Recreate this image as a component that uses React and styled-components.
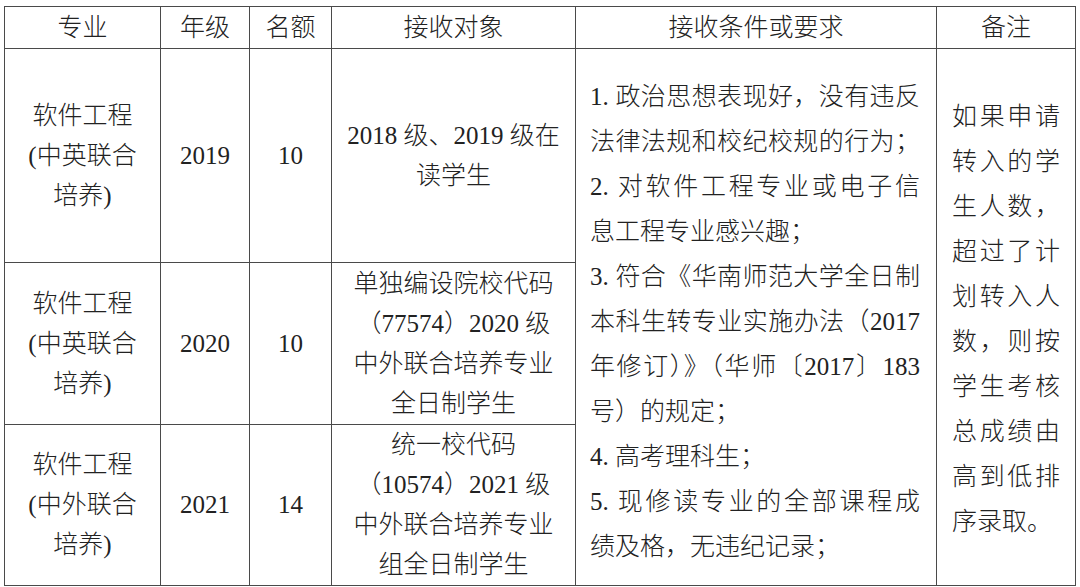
import React from "react";
import styled, { createGlobalStyle } from "styled-components";

const GlobalStyle = createGlobalStyle`
  html, body {
    margin: 0;
    padding: 0;
    background: #ffffff;
  }
  body {
    font-family: "Liberation Serif", "Noto Sans CJK SC", serif;
    color: #222222;
  }
`;

const Page = styled.div`
  width: 1080px;
  height: 587px;
  padding: 6px 5px 0 4px;
  box-sizing: border-box;
  overflow: hidden;
`;

const Table = styled.table`
  width: 1071px;
  border-collapse: collapse;
  table-layout: fixed;
  font-size: 25px;
  font-weight: 300;
`;

const Cell = styled.td`
  border: 1.5px solid #4a4a4a;
  padding: ${(p) => p.$pad || "0"};
  height: ${(p) => p.$h}px;
  text-align: ${(p) => p.$align || "center"};
  vertical-align: middle;
  line-height: ${(p) => p.$lh || 40}px;
  box-sizing: border-box;
`;

const HeadCell = styled.th`
  border: 1.5px solid #4a4a4a;
  height: 41px;
  padding: 0;
  font-weight: 300;
  text-align: center;
  vertical-align: middle;
  line-height: 38px;
`;

const Line = styled.div`
  white-space: nowrap;
  text-align: ${(p) => (p.$justify ? "justify" : "inherit")};
  text-align-last: ${(p) => (p.$justify ? "justify" : "auto")};
`;

const cols = [156, 89, 82, 244, 361, 139];
const headers = ["专业", "年级", "名额", "接收对象", "接收条件或要求", "备注"];

const rows = [
  {
    h: 214,
    major: ["软件工程", "(中英联合", "培养)"],
    grade: "2019",
    quota: "10",
    target: ["2018 级、2019 级在", "读学生"],
  },
  {
    h: 162,
    major: ["软件工程", "(中英联合", "培养)"],
    grade: "2020",
    quota: "10",
    target: ["单独编设院校代码", "（77574）2020 级", "中外联合培养专业", "全日制学生"],
  },
  {
    h: 159,
    major: ["软件工程", "(中外联合", "培养)"],
    grade: "2021",
    quota: "14",
    target: ["统一校代码", "（10574）2021 级", "中外联合培养专业", "组全日制学生"],
  },
];

const conditions = [
  ["1. 政治思想表现好，没有违反", true],
  ["法律法规和校纪校规的行为；", true],
  ["2. 对软件工程专业或电子信", true],
  ["息工程专业感兴趣；", false],
  ["3. 符合《华南师范大学全日制", true],
  ["本科生转专业实施办法（2017", true],
  ["年修订）》（华师〔2017〕183", true],
  ["号）的规定；", false],
  ["4. 高考理科生；", false],
  ["5. 现修读专业的全部课程成", true],
  ["绩及格，无违纪记录；", false],
];

const notes = [
  ["如果申请", true],
  ["转入的学", true],
  ["生人数，", true],
  ["超过了计", true],
  ["划转入人", true],
  ["数，则按", true],
  ["学生考核", true],
  ["总成绩由", true],
  ["高到低排", true],
  ["序录取。", false],
];

function Lines({ items }) {
  return items.map((t, i) => <Line key={i}>{t}</Line>);
}

export default function App() {
  return (
    <>
      <GlobalStyle />
      <Page>
        <Table>
          <colgroup>
            {cols.map((w, i) => (
              <col key={i} style={{ width: w }} />
            ))}
          </colgroup>
          <thead>
            <tr>
              {headers.map((h) => (
                <HeadCell key={h}>{h}</HeadCell>
              ))}
            </tr>
          </thead>
          <tbody>
            {rows.map((r, i) => (
              <tr key={r.grade}>
                <Cell $h={r.h}>
                  <Lines items={r.major} />
                </Cell>
                <Cell $h={r.h}>{r.grade}</Cell>
                <Cell $h={r.h}>{r.quota}</Cell>
                <Cell $h={r.h}>
                  <Lines items={r.target} />
                </Cell>
                {i === 0 && (
                  <>
                    <Cell rowSpan={3} $align="left" $lh={45} $pad="8px 16px 0 14px">
                      {conditions.map(([t, j], k) => (
                        <Line key={k} $justify={j}>
                          {t}
                        </Line>
                      ))}
                    </Cell>
                    <Cell rowSpan={3} $align="left" $lh={45} $pad="4px 15px 0 15px">
                      {notes.map(([t, j], k) => (
                        <Line key={k} $justify={j}>
                          {t}
                        </Line>
                      ))}
                    </Cell>
                  </>
                )}
              </tr>
            ))}
          </tbody>
        </Table>
      </Page>
    </>
  );
}
